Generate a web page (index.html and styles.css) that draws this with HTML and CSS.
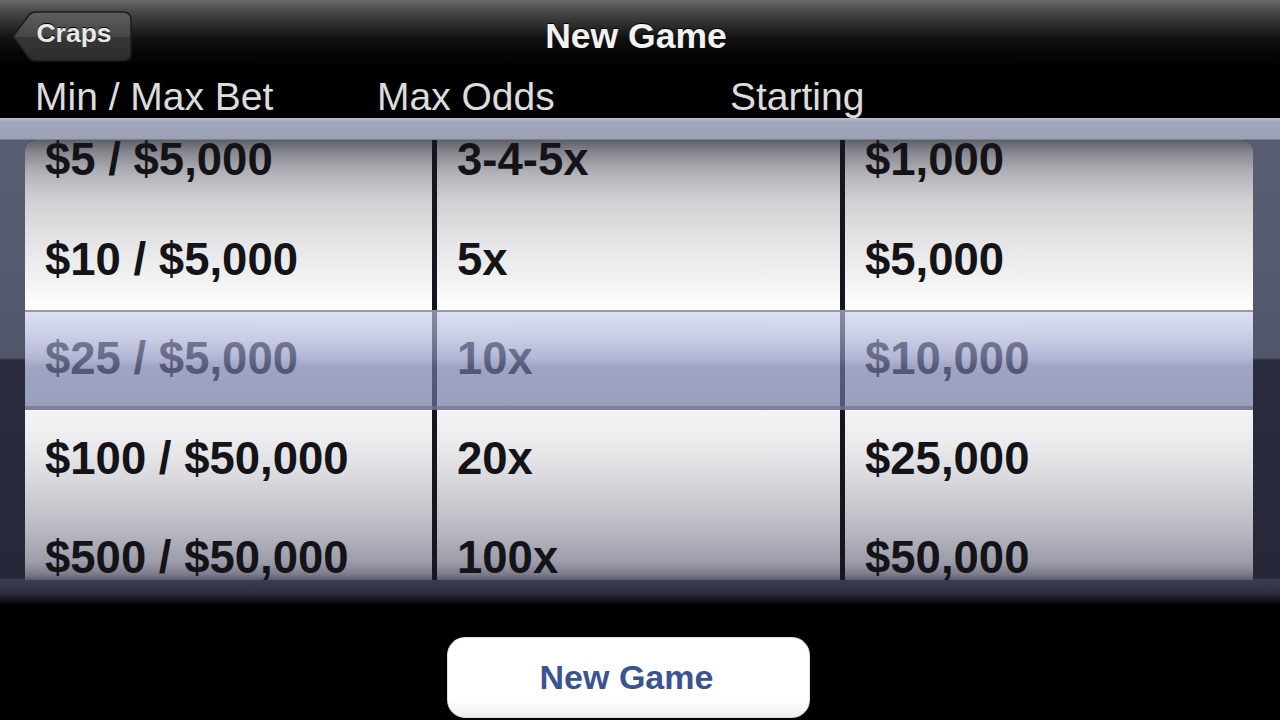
FILE: index.html
```html
<!DOCTYPE html>
<html>
<head>
<meta charset="utf-8">
<link rel="stylesheet" href="styles.css">
</head>
<body>
<div class="screen">
  <header class="navbar">
    <div class="nav-left">
      <a class="back">
        <svg class="back-shape" viewBox="0 0 120 51" preserveAspectRatio="none">
          <defs>
            <linearGradient id="bg" x1="0" y1="0" x2="0" y2="1">
              <stop offset="0" stop-color="#5f5f5f"/>
              <stop offset="0.5" stop-color="#454545"/>
              <stop offset="0.52" stop-color="#363636"/>
              <stop offset="1" stop-color="#2c2c2c"/>
            </linearGradient>
          </defs>
          <path d="M1 25.5 L17 4 Q19.5 1 24 1 L111 1 Q119 1 119 9 L119 42 Q119 50 111 50 L24 50 Q19.5 50 17 47 Z" fill="url(#bg)" stroke="#1c1c1c" stroke-width="1.5"/>
        </svg>
        <span class="back-label">Craps</span>
      </a>
    </div>
    <h1 class="title">New Game</h1>
    <div class="nav-right"></div>
  </header>

  <div class="labels">
    <span class="label">Min / Max Bet</span>
    <span class="label">Max Odds</span>
    <span class="label">Starting</span>
  </div>

  <div class="picker">
    <div class="wells">
      <div class="wheel">
        <ul class="rows">
          <li>$5 / $5,000</li>
          <li>$10 / $5,000</li>
          <li>$25 / $5,000</li>
          <li>$100 / $50,000</li>
          <li>$500 / $50,000</li>
        </ul>
      </div>
      <div class="wheel">
        <ul class="rows">
          <li>3-4-5x</li>
          <li>5x</li>
          <li>10x</li>
          <li>20x</li>
          <li>100x</li>
        </ul>
      </div>
      <div class="wheel">
        <ul class="rows">
          <li>$1,000</li>
          <li>$5,000</li>
          <li>$10,000</li>
          <li>$25,000</li>
          <li>$50,000</li>
        </ul>
      </div>
      <div class="selection"></div>
    </div>
  </div>

  <div class="actions">
    <button class="new-game">New Game</button>
  </div>
</div>
</body>
</html>
```

FILE: styles.css
```css
html, body {
  margin: 0;
  padding: 0;
  background: #000;
}

.screen {
  width: 1280px;
  height: 720px;
  overflow: hidden;
  background: #000;
  font-family: "Liberation Sans", Arial, Helvetica, sans-serif;
}

/* Nav bar */
.navbar {
  height: 70px;
  display: grid;
  grid-template-columns: 1fr auto 1fr;
  align-items: center;
  background: linear-gradient(to bottom, #6c6c6c 0px, #4c4c4c 10px, #262626 28px, #111 38px, #050505 55px, #000 70px);
}

.nav-left {
  display: flex;
  align-items: center;
  padding-left: 12px;
}

.back {
  position: relative;
  display: flex;
  align-items: center;
  justify-content: center;
  width: 120px;
  height: 51px;
  margin-top: 2px;
  padding-left: 4px;
  box-sizing: border-box;
}

.back-shape {
  position: absolute;
  left: 0;
  top: 0;
  width: 120px;
  height: 51px;
}

.back-label {
  position: relative;
  color: #e8e8e8;
  font-weight: bold;
  font-size: 26.5px;
  text-shadow: 0 -1px 0 #000;
  margin-top: -5px;
}

.title {
  margin: 0;
  color: #f2f2f2;
  font-size: 35.5px;
  font-weight: bold;
  text-shadow: 0 -1px 0 #000;
  margin-right: 8px;
  margin-top: 2px;
}

/* Column labels */
.labels {
  height: 48px;
  display: grid;
  grid-template-columns: 342px 353px auto;
  align-items: center;
  padding-left: 35px;
  background: #000;
}

.label {
  color: #dcdcdc;
  font-size: 39px;
  line-height: 1;
  margin-top: 4px;
}

/* Picker */
.picker {
  height: 487px;
  box-sizing: border-box;
  padding: 22px 27px 25px 25px;
  background: linear-gradient(to bottom,
    #b9bdc9 0px, #a3a9bb 4px, #9ba1b4 21px,
    #5a5e72 22px, #52566a 240px,
    #2a2c3e 242px, #26283a 460px,
    #3b3d52 462px, #2c2e40 475px, #0c0c12 484px, #000 487px);
}

.wells {
  position: relative;
  height: 440px;
  display: grid;
  grid-template-columns: 407px 403px 408px;
  column-gap: 5px;
  background: #15161e;
  border-radius: 10px 10px 0 0;
  overflow: hidden;
}

.wheel {
  overflow: hidden;
  background: linear-gradient(to bottom,
    #5e5e66 0px, #86868e 12px, #b0b0b6 32px, #d0d0d4 60px, #e4e4e6 100px,
    #f2f2f3 140px, #fbfbfb 160px, #ffffff 168px,
    #f4f4f6 270px, #ececee 300px, #dedee2 330px, #cbcbd1 360px,
    #b5b5bf 395px, #9c9caa 422px, #7c7c8c 434px, #5a5a6a 440px);
}

.rows {
  list-style: none;
  margin: -30px 0 0 0;
  padding: 0;
}

.rows li {
  height: 99.5px;
  display: flex;
  align-items: center;
  padding-left: 20px;
  font-size: 45.5px;
  line-height: 1;
  font-weight: bold;
  color: #141418;
  white-space: nowrap;
}

.selection {
  position: absolute;
  left: 0;
  right: 0;
  top: 170px;
  height: 100px;
  box-sizing: border-box;
  border-top: 2px solid rgba(150, 150, 162, 0.85);
  border-bottom: 4px solid rgba(95, 98, 128, 0.75);
  background: linear-gradient(to bottom,
    rgba(200, 205, 232, 0.64) 0px,
    rgba(180, 186, 220, 0.64) 20px,
    rgba(145, 151, 195, 0.66) 45px,
    rgba(116, 122, 168, 0.67) 55px,
    rgba(110, 116, 162, 0.67) 100%);
}

/* Bottom action */
.actions {
  height: 115px;
  background: #000;
}

.new-game {
  display: block;
  margin: 32px 0 0 447px;
  width: 363px;
  height: 81px;
  border: 1px solid #ddd;
  border-radius: 18px;
  background: linear-gradient(to bottom, #ffffff 0%, #ffffff 80%, #eeeeee 100%);
  color: #3a5493;
  font-family: "Liberation Sans", Arial, Helvetica, sans-serif;
  font-size: 34px;
  font-weight: bold;
  padding: 0 4px 0 0;
}
```
